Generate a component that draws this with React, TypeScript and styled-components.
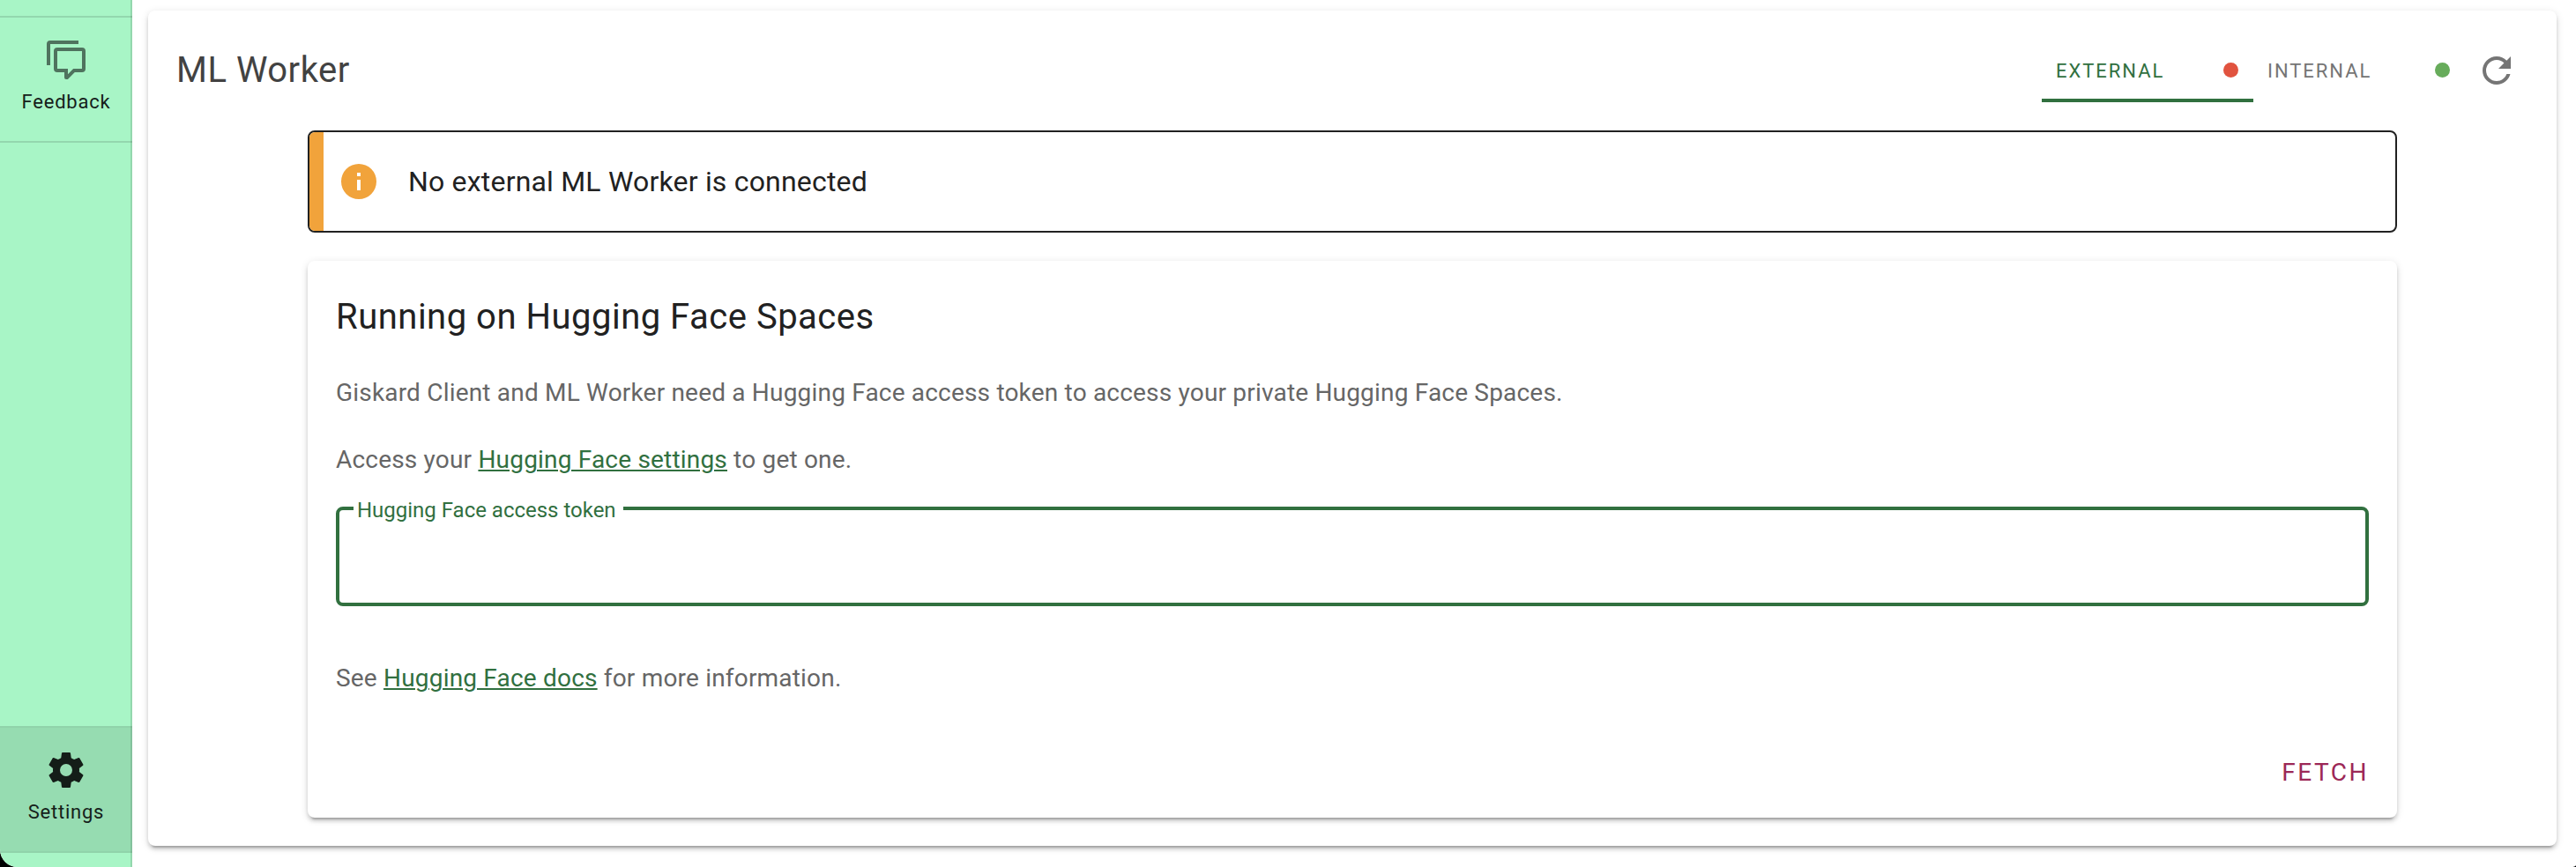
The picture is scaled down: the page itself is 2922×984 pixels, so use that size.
import React from "react";
import styled, { createGlobalStyle } from "styled-components";

const GlobalStyle = createGlobalStyle`
  *, *::before, *::after { box-sizing: border-box; }
  html, body { margin: 0; background: #000; }
  body { overflow: hidden; font-family: Roboto, "Liberation Sans", sans-serif; color: #212121; }
`;

const elevation = `
  0 6px 2px -4px rgba(0, 0, 0, 0.2),
  0 4px 4px 0 rgba(0, 0, 0, 0.14),
  0 2px 10px 0 rgba(0, 0, 0, 0.12)`;

const Shell = styled.div`
  display: flex;
  width: 2922px;
  height: 984px;
  overflow: hidden;
  background: #fff;
  border-bottom-left-radius: 20px;
  border-bottom-right-radius: 6px 2px;
`;

const Sidebar = styled.nav`
  display: flex;
  flex-direction: column;
  justify-content: space-between;
  flex: none;
  width: 150px;
  padding: 18px 0 16px;
  background: linear-gradient(to left, rgba(0, 0, 0, 0.12) 2px, transparent 2px), #a8f5c6;
`;

const NavItem = styled.a<{ $active?: boolean }>`
  display: flex;
  flex-direction: column;
  align-items: center;
  height: 144px;
  padding-top: 24px;
  border: solid rgba(0, 0, 0, 0.12);
  border-width: 2px 0;
  font-size: 22px;
  line-height: 32px;
  letter-spacing: 0.77px;
  color: #15201a;
  background: ${(p) => (p.$active ? "rgba(0, 0, 0, 0.1)" : "transparent")};
  ${(p) => p.$active && "border-color: rgba(0, 0, 0, 0.04);"}
`;

const NavLabel = styled.span`
  margin-top: 8px;
`;

const Icon = styled.svg<{ $size: number; $color: string }>`
  display: block;
  flex: none;
  width: ${(p) => p.$size}px;
  height: ${(p) => p.$size}px;
  fill: ${(p) => p.$color};
`;

const Main = styled.main`
  flex: 1;
  padding: 12px 22px 24px 18px;
`;

const Panel = styled.section`
  height: 948px;
  padding: 32px 0;
  border-radius: 8px;
  background: #fff;
  box-shadow: ${elevation};
`;

const PanelHeader = styled.header`
  display: flex;
  align-items: center;
  height: 72px;
  padding: 0 44px 0 32px;
`;

const PanelTitle = styled.h1`
  flex: 1;
  margin: 0;
  font-size: 40px;
  font-weight: 400;
  line-height: 64px;
  letter-spacing: 0.5px;
  color: #424242;
`;

const Tabs = styled.div`
  display: flex;
  margin-right: 12px;
`;

const Tab = styled.button<{ $selected?: boolean }>`
  display: flex;
  align-items: center;
  justify-content: space-between;
  width: 240px;
  height: 72px;
  margin: 0;
  padding: 5px 17px 0 16px;
  border: 0;
  border-bottom: 4px solid ${(p) => (p.$selected ? "#31703f" : "transparent")};
  background: none;
  font: 400 22px/32px Roboto, "Liberation Sans", sans-serif;
  letter-spacing: 1.96px;
  text-transform: uppercase;
  color: ${(p) => (p.$selected ? "#31703f" : "#757575")};
`;

const StatusDot = styled.span<{ $color: string }>`
  width: 17px;
  height: 17px;
  margin-bottom: 2px;
  border-radius: 50%;
  background: ${(p) => p.$color};
`;

const Content = styled.div`
  width: 2370px;
  margin: 32px 0 0 181px;
`;

const Alert = styled.div`
  display: flex;
  align-items: center;
  height: 116px;
  border: 2px solid #212121;
  border-radius: 8px;
  overflow: hidden;
  font-size: 32px;
  line-height: 48px;
  letter-spacing: 0.19px;
`;

const AlertBar = styled.span`
  align-self: stretch;
  width: 16px;
  margin-right: 16px;
  background: #f1a33b;
`;

const AlertText = styled.span`
  margin-left: 32px;
`;

const Card = styled.section`
  display: flex;
  flex-direction: column;
  height: 632px;
  margin-top: 32px;
  padding: 32px 32px 15px;
  border-radius: 8px;
  background: #fff;
  box-shadow: ${elevation};
`;

const CardTitle = styled.h2`
  margin: 0;
  font-size: 40px;
  font-weight: 400;
  line-height: 64px;
  letter-spacing: 0.5px;
`;

const Paragraph = styled.p<{ $top: number }>`
  margin: ${(p) => p.$top}px 0 0;
  font-size: 28px;
  line-height: 40px;
  letter-spacing: 0.19px;
  color: #666;
`;

const Link = styled.a`
  color: #31703f;
  text-decoration: underline;
  text-decoration-thickness: 2px;
  text-underline-offset: 2px;
`;

const Field = styled.fieldset`
  height: 127px;
  margin: 19px 0 0;
  padding: 0 0 0 16px;
  min-width: 0;
  border: 4px solid #31703f;
  border-radius: 8px;
`;

const FieldLabel = styled.legend`
  width: 306px;
  padding: 5px 0 0 4px;
  font-size: 24px;
  line-height: 27px;
  letter-spacing: -0.01px;
  white-space: nowrap;
  color: #31703f;
`;

const Actions = styled.div`
  display: flex;
  justify-content: flex-end;
  margin-top: auto;
`;

const TextButton = styled.button`
  height: 72px;
  padding: 0;
  border: 0;
  background: none;
  font: 400 28px/40px Roboto, "Liberation Sans", sans-serif;
  letter-spacing: 2.5px;
  text-transform: uppercase;
  color: #9c2857;
`;

const paths = {
  comments:
    "M12,23A1,1 0 0,1 11,22V19H7A2,2 0 0,1 5,17V7A2,2 0 0,1 7,5H21A2,2 0 0,1 23,7V17A2,2 0 0,1 21,19H16.9L13.2,22.71C13,22.89 12.76,23 12.5,23H12M13,17V20.08L16.08,17H21V7H7V17H13M3,15H1V3A2,2 0 0,1 3,1H19V3H3V15Z",
  cog: "M12,15.5A3.5,3.5 0 0,1 8.5,12A3.5,3.5 0 0,1 12,8.5A3.5,3.5 0 0,1 15.5,12A3.5,3.5 0 0,1 12,15.5M19.43,12.97C19.47,12.65 19.5,12.33 19.5,12C19.5,11.67 19.47,11.34 19.43,11L21.54,9.37C21.73,9.22 21.78,8.95 21.66,8.73L19.66,5.27C19.54,5.05 19.27,4.96 19.05,5.05L16.56,6.05C16.04,5.66 15.5,5.32 14.87,5.07L14.5,2.42C14.46,2.18 14.25,2 14,2H10C9.75,2 9.54,2.18 9.5,2.42L9.13,5.07C8.5,5.32 7.96,5.66 7.44,6.05L4.95,5.05C4.73,4.96 4.46,5.05 4.34,5.27L2.34,8.73C2.21,8.95 2.27,9.22 2.46,9.37L4.57,11C4.53,11.34 4.5,11.67 4.5,12C4.5,12.33 4.53,12.65 4.57,12.97L2.46,14.63C2.27,14.78 2.21,15.05 2.34,15.27L4.34,18.73C4.46,18.95 4.73,19.03 4.95,18.95L7.44,17.94C7.96,18.34 8.5,18.68 9.13,18.93L9.5,21.58C9.54,21.82 9.75,22 10,22H14C14.25,22 14.46,21.82 14.5,21.58L14.87,18.93C15.5,18.67 16.04,18.34 16.56,17.94L19.05,18.95C19.27,19.03 19.54,18.95 19.66,18.73L21.66,15.27C21.78,15.05 21.73,14.78 21.54,14.63L19.43,12.97Z",
  refresh:
    "M17.65,6.35C16.2,4.9 14.21,4 12,4A8,8 0 0,0 4,12A8,8 0 0,0 12,20C15.73,20 18.84,17.45 19.73,14H17.65C16.83,16.33 14.61,18 12,18A6,6 0 0,1 6,12A6,6 0 0,1 12,6C13.66,6 15.14,6.69 16.22,7.78L13,11H20V4L17.65,6.35Z",
  info: "M13,9H11V7H13M13,17H11V11H13M12,2A10,10 0 0,0 2,12A10,10 0 0,0 12,22A10,10 0 0,0 22,12A10,10 0 0,0 12,2Z",
};

function MdiIcon({ name, color, size = 48 }: { name: keyof typeof paths; color: string; size?: number }) {
  return (
    <Icon viewBox="0 0 24 24" $size={size} $color={color} aria-hidden="true">
      <path d={paths[name]} />
    </Icon>
  );
}

export default function App() {
  return (
    <>
      <GlobalStyle />
      <Shell>
        <Sidebar>
          <NavItem>
            <MdiIcon name="comments" color="#4f735e" />
            <NavLabel>Feedback</NavLabel>
          </NavItem>
          <NavItem $active>
            <MdiIcon name="cog" color="#141d18" />
            <NavLabel>Settings</NavLabel>
          </NavItem>
        </Sidebar>
        <Main>
          <Panel>
            <PanelHeader>
              <PanelTitle>ML Worker</PanelTitle>
              <Tabs>
                <Tab $selected>
                  External
                  <StatusDot $color="#e1533f" />
                </Tab>
                <Tab>
                  Internal
                  <StatusDot $color="#67ac5b" />
                </Tab>
              </Tabs>
              <MdiIcon name="refresh" color="#757575" />
            </PanelHeader>
            <Content>
              <Alert>
                <AlertBar />
                <MdiIcon name="info" color="#f1a33b" />
                <AlertText>No external ML Worker is connected</AlertText>
              </Alert>
              <Card>
                <CardTitle>Running on Hugging Face Spaces</CardTitle>
                <Paragraph $top={34}>
                  Giskard Client and ML Worker need a Hugging Face access token to access your private Hugging Face
                  Spaces.
                </Paragraph>
                <Paragraph $top={36}>
                  Access your <Link>Hugging Face settings</Link> to get one.
                </Paragraph>
                <Field>
                  <FieldLabel>Hugging Face access token</FieldLabel>
                </Field>
                <Paragraph $top={62}>
                  See <Link>Hugging Face docs</Link> for more information.
                </Paragraph>
                <Actions>
                  <TextButton>Fetch</TextButton>
                </Actions>
              </Card>
            </Content>
          </Panel>
        </Main>
      </Shell>
    </>
  );
}
